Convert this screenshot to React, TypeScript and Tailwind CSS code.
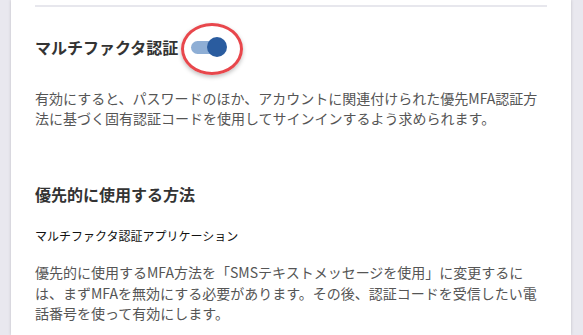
import { useState } from 'react';

const font = "font-['Noto_Sans_CJK_JP','Noto_Sans',sans-serif]";

/**
 * Toggle - MFA on/off switch, highlighted with a red callout ring
 */
const Toggle = ({ on, onChange }: { on: boolean; onChange: () => void }) => (
    <button
        type="button"
        onClick={onChange}
        aria-label="マルチファクタ認証"
        className="relative ml-[13px] h-[20px] w-[37px] shrink-0"
    >
        <span className="absolute left-0 top-[4px] h-[13px] w-[34px] rounded-full bg-[#8eaed5]" />
        <span
            className={`absolute top-0 h-[20px] w-[20px] rounded-full bg-[#2a5c9f] ${on ? 'left-[16px]' : 'left-0'}`}
        />
        {/* callout ellipse */}
        <span className="pointer-events-none absolute -left-[10px] -top-[14px] h-[52px] w-[62px] rounded-[50%] border-[3px] border-[#e8474c] shadow-[0_2px_4px_rgba(0,0,0,0.25)]" />
    </button>
);

export default function App() {
    const [enabled, setEnabled] = useState(true);

    return (
        <div className={`h-[335px] overflow-hidden bg-[#e9e8ef] pl-[11px] ${font}`}>
            <div className="flex h-full w-[560px] flex-col bg-white px-[24px] pt-[5px] shadow-[0_0_3px_rgba(0,0,0,0.18)]">
                <div className="h-[2px] bg-[#e7e7ed]" />

                {/* MFA on/off */}
                <section className="mt-[28px] flex flex-col gap-[29px]">
                    <div className="flex items-center">
                        <h2 className="text-[16px] font-bold leading-[24px] text-[#333]">マルチファクタ認証</h2>
                        <Toggle on={enabled} onChange={() => setEnabled(!enabled)} />
                    </div>
                    <p className="text-[14px] leading-[20px] text-[#555]">
                        有効にすると、パスワードのほか、アカウントに関連付けられた優先MFA認証方法に基づく固有認証コードを使用してサインインするよう求められます。
                    </p>
                </section>

                {/* Preferred method */}
                <section className="mt-[54px] flex flex-col">
                    <h2 className="text-[16px] font-bold leading-[24px] text-[#333]">優先的に使用する方法</h2>
                    <p className="mt-[20px] text-[12px] leading-[20px] text-[#111]">マルチファクタ認証アプリケーション</p>
                    <p className="mt-[16px] text-[14px] leading-[20.5px] text-[#555]">
                        優先的に使用するMFA方法を「SMSテキストメッセージを使用」に変更するには、まずMFAを無効にする必要があります。その後、認証コードを受信したい電話番号を使って有効にします。
                    </p>
                </section>
            </div>
        </div>
    );
}
